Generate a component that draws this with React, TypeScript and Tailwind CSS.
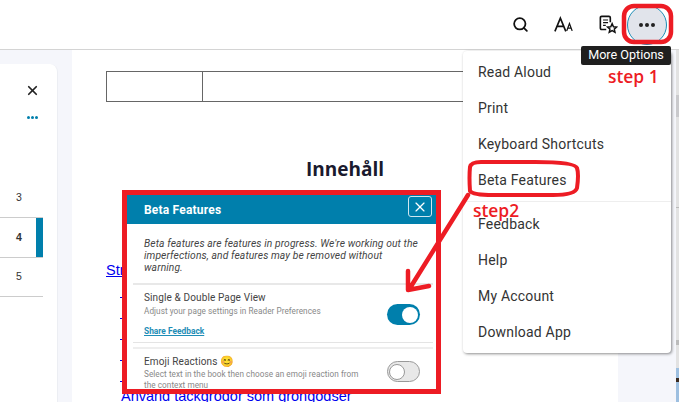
import { Search, X } from "lucide-react";

const menuTop = ["Read Aloud", "Print", "Keyboard Shortcuts", "Beta Features"];
const menuBottom = ["Feedback", "Help", "My Account", "Download App"];

function Toggle({ on }: { on: boolean }) {
    return (
        <div className={on
            ? "w-[33px] h-[21px] rounded-full bg-[#007fac] flex items-center justify-end pr-[2px] shrink-0"
            : "w-[33px] h-[21px] rounded-full bg-[#e8e8e8] border border-[#999] flex items-center pl-[1px] shrink-0"}>
            <div className={on
                ? "w-[16px] h-[16px] rounded-full bg-white"
                : "w-[16px] h-[16px] rounded-full bg-white border border-[#999]"} />
        </div>
    );
}

function BetaPopup() {
    return (
        <div className="absolute left-[122px] top-[190px] w-[319px] h-[204px] border-[5px] border-[#ed1c24] bg-white overflow-hidden font-['Roboto',sans-serif]">
            <div className="h-[29px] bg-[#007fac] flex items-center justify-between pl-[17px] pr-[4px]">
                <span className="text-white text-[12px] font-bold tracking-[0.2px]">Beta Features</span>
                <div className="w-[24px] h-[21px] mb-[6px] rounded-[3px] border border-[#cfe6f0] flex items-center justify-center">
                    <X className="w-[16px] h-[16px] text-white" strokeWidth={1.75} />
                </div>
            </div>
            <div className="ml-[6px] mr-[3px]">
                <div className="h-[61px] pt-[14px] px-[11px] border-b-2 border-[#e8e8e8]">
                    <p className="w-[276px] text-[10.3px] leading-[12px] italic text-[#444] tracking-[0.1px]">
                        Beta features are features in progress. We're working out the imperfections, and features may be removed without warning.
                    </p>
                </div>
                <div className="h-[58px] pl-[11px] pr-[13px] pt-[6px] flex justify-between border-b border-[#e4e4e4]">
                    <div>
                        <div className="text-[10px] leading-[14px] text-[#444] tracking-[0.12px]">Single &amp; Double Page View</div>
                        <div className="text-[8.2px] leading-[11px] mt-[1px] text-[#888] tracking-[0.05px]">Adjust your page settings in Reader Preferences</div>
                        <div className="text-[8.4px] leading-[11px] mt-[9px] font-bold underline text-[#1e8db6]">Share Feedback</div>
                    </div>
                    <div className="pt-[13px]"><Toggle on /></div>
                </div>
                <div className="mt-[4px] border-t-2 border-[#eee] pl-[11px] pr-[13px] pt-[6px] flex justify-between">
                    <div className="w-[225px]">
                        <div className="text-[10px] leading-[14px] text-[#444] tracking-[0.12px]">
                            Emoji Reactions <span className="text-[11px]">😊</span>
                        </div>
                        <div className="text-[8.2px] leading-[11px] text-[#888] tracking-[0.05px]">Select text in the book then choose an emoji reaction from the context menu</div>
                    </div>
                    <div className="pt-[6px]"><Toggle on={false} /></div>
                </div>
            </div>
        </div>
    );
}

function Annotations() {
    return (
        <svg className="absolute left-0 top-0 pointer-events-none" width="679" height="402" fill="none" stroke="#ed1c24" strokeLinecap="round" strokeLinejoin="round">
            <rect x="624" y="6" width="47" height="36" rx="10" strokeWidth="4.5" />
            <path d="M481 162 h54 q40 0 42 6 q2 6 0 20 q-2 7 -24 7 h-60 q-20 0 -23 -4 q-1 -14 0 -24 q1 -5 11 -5z" strokeWidth="4" />
            <path d="M468 195 L410 288 M408 271 L408 290 L429 286" strokeWidth="4.5" />
        </svg>
    );
}

export default function App() {
    return (
        <div className="relative w-[679px] h-[402px] overflow-hidden bg-[#f5f6fb] font-['Roboto',sans-serif]">
            {/* top bar */}
            <div className="h-[50px] bg-white border-b border-[#d4d4d4] flex items-center justify-end pr-[12px]">
                <Search className="w-[17px] h-[17px] text-[#111] mr-[25px]" strokeWidth={2.5} />
                <svg className="mr-[25px]" width="20" height="17" viewBox="0 0 22 18" fill="none" stroke="#111" strokeWidth="1.8">
                    <path d="M1 16.5 L7 2 L13 16.5 M3.2 11 H10.8" />
                    <path d="M14 16 L17 8 L20 16 M15 13 H19" strokeWidth="1.4" />
                </svg>
                <svg className="mr-[9px]" width="19" height="19" viewBox="0 0 21 21" fill="none" stroke="#111" strokeWidth="1.8">
                    <path d="M8 16 H3 Q1.5 16 1.5 14.5 V3 Q1.5 1.5 3 1.5 H11 Q12.5 1.5 12.5 3 V8" />
                    <path d="M4.5 5.5 H10 M4.5 8.5 H10 M4.5 11.5 H7.5" strokeWidth="1.3" />
                    <path d="M14.5 9.5 L16 13 L19.5 13.3 L16.9 15.6 L17.7 19 L14.5 17.2 L11.3 19 L12.1 15.6 L9.5 13.3 L13 13 Z" strokeWidth="1.6" />
                </svg>
                <div className="w-[40px] h-[40px] rounded-full bg-[#e1e4eb] border border-[#1e8db6] flex items-center justify-center gap-[2px]">
                    <span className="w-[4px] h-[4px] rounded-full bg-[#222]" />
                    <span className="w-[4px] h-[4px] rounded-full bg-[#222]" />
                    <span className="w-[4px] h-[4px] rounded-full bg-[#222]" />
                </div>
            </div>

            <div className="flex h-[352px]">
                {/* left contents panel */}
                <div className="w-[58px] h-[338px] mt-[14px] bg-white rounded-tr-[8px] border-r border-[#eceef3] shrink-0 text-[#333]">
                    <div className="h-[32px] flex justify-end items-end pr-[17px]">
                        <X className="w-[15px] h-[15px] text-[#222] mb-[-2px]" strokeWidth={2.75} />
                    </div>
                    <div className="mt-[20px] h-[4px] flex gap-[1px] justify-end pr-[19px]">
                        <span className="w-[3px] h-[3px] rounded-full bg-[#007fac]" />
                        <span className="w-[3px] h-[3px] rounded-full bg-[#007fac]" />
                        <span className="w-[3px] h-[3px] rounded-full bg-[#007fac]" />
                    </div>
                    <div className="w-[43px] mt-[58px] text-[10.5px]">
                        <div className="h-[40px] border-b border-[#ccc] flex items-center pl-[16px] font-['Liberation_Sans',sans-serif]">3</div>
                        <div className="h-[40px] border-b border-[#ccc] flex items-center justify-between pl-[16px] font-bold font-['Liberation_Sans',sans-serif]">
                            4<div className="w-[7px] h-full bg-[#007fac]" />
                        </div>
                        <div className="h-[39px] border-b border-[#ccc] flex items-center pl-[16px] font-['Liberation_Sans',sans-serif]">5</div>
                    </div>
                </div>

                {/* book page */}
                <div className="w-[546px] ml-[14px] bg-white shrink-0 pl-[34px] pt-[21px] font-['Liberation_Sans',sans-serif]">
                    <div className="w-[480px] h-[31px] border border-[#666] flex">
                        <div className="w-[96px] border-r border-[#666]" />
                    </div>
                    <h1 className="w-[478px] mt-[55px] text-center text-[19px] leading-[24px] font-bold text-[#1a1a2e] font-['Open_Sans',sans-serif]">Innehåll</h1>
                    <a className="block mt-[81px] text-[14.5px] leading-[16px] text-[#0000ee] underline">Str</a>
                    <div className="ml-[14px] mt-[19px] flex flex-col gap-[20px]">
                        <div className="w-[6px] h-[1px] bg-[#0000ee]" />
                        <div className="w-[6px] h-[1px] bg-[#0000ee]" />
                        <div className="w-[6px] h-[1px] bg-[#0000ee]" />
                        <div className="w-[6px] h-[1px] bg-[#0000ee]" />
                        <div className="w-[6px] h-[1px] bg-[#0000ee]" />
                    </div>
                    <a className="block ml-[15px] mt-[6px] text-[14.5px] leading-[16px] text-[#0000ee] underline whitespace-nowrap">Använd tackgrodor som grongodser</a>
                </div>

                {/* right gutter */}
                <div className="flex-1" />
            </div>

            {/* cut-off neighbouring window at the right edge */}
            <div className="absolute right-0 top-[50px] bottom-0 w-[3px] bg-[#e2e2e2] flex flex-col">
                <div className="h-[45px]" />
                <div className="h-[22px] bg-[#c9c9cc]" />
                <div className="h-[91px] border-b border-[#bbb]" />
                <div className="h-[132px]" />
                <div className="h-[5px] bg-[#bbb]" />
                <div className="h-[23px]" />
                <div className="flex-1 bg-[#9dbfe0]">
                    <div className="h-[10px]" />
                    <div className="h-[4px] bg-[#3a2a20]" />
                </div>
            </div>

            <BetaPopup />

            {/* more options menu */}
            <div className="absolute left-[463px] top-[51px] w-[208px] h-[302px] bg-white rounded-[4px] shadow-[1px_1px_3px_rgba(0,0,0,0.45)] py-[3px] text-[14px] text-[#333] tracking-[0.2px]">
                {menuTop.map((item) => (
                    <div key={item} className="h-[36px] pl-[15px] flex items-center">{item}</div>
                ))}
                <div className="h-[5px] mt-[3px] border-t border-[#eee]" />
                {menuBottom.map((item) => (
                    <div key={item} className="h-[36px] pl-[15px] flex items-center">{item}</div>
                ))}
            </div>

            {/* tooltip */}
            <div className="absolute left-[581px] top-[46px] w-[90px] h-[19px] bg-[#1f1f1f] rounded-[2px] text-white text-[12.6px] flex items-center justify-center">More Options</div>

            <Annotations />

            <span className="absolute left-[608px] top-[65px] text-[#ed1c24] text-[17.4px] leading-[22px] font-semibold font-['Open_Sans',sans-serif]">step 1</span>
            <span className="absolute left-[473px] top-[199px] text-[#ed1c24] text-[17.4px] leading-[22px] font-semibold font-['Open_Sans',sans-serif]">step2</span>
        </div>
    );
}
